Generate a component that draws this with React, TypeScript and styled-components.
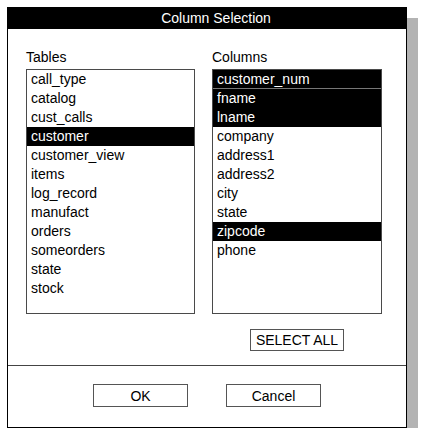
import React from 'react';
import styled, { createGlobalStyle } from 'styled-components';

const GlobalStyle = createGlobalStyle`
  html, body {
    margin: 0;
    padding: 0;
    background: #fff;
  }
  body {
    font-family: "Liberation Sans", Arial, Helvetica, sans-serif;
    font-size: 14px;
    color: #000;
  }
`;

const Page = styled.div`
  padding: 7px 0 0 7px;
`;

const Dialog = styled.div`
  width: 398px;
  border: 1px solid #000;
  background: #fff;
  box-shadow: 11px 11px 0 #b3b3b3;
`;

const TitleBar = styled.div`
  height: 21px;
  line-height: 21px;
  background: #000;
  color: #fff;
  text-align: center;
  padding-left: 18px;
  font-size: 14px;
`;

const Body = styled.div`
  padding: 20px 0 14px 18px;
`;

const Panes = styled.div`
  display: grid;
  grid-template-columns: 169px 170px;
  column-gap: 17px;
`;

const Pane = styled.div`
  display: flex;
  flex-direction: column;
`;

const Label = styled.div`
  height: 17px;
  line-height: 17px;
  margin-bottom: 3px;
`;

const List = styled.ul`
  list-style: none;
  margin: 0;
  padding: 0;
  height: 245px;
  box-sizing: border-box;
  border: 1px solid #4a4a4a;
  overflow: hidden;
`;

const Item = styled.li<{ $selected?: boolean; $focus?: boolean }>`
  height: 19px;
  line-height: 19px;
  padding-left: 4px;
  white-space: nowrap;
  box-sizing: border-box;
  background: ${p => (p.$selected ? '#000' : 'transparent')};
  color: ${p => (p.$selected ? '#fff' : '#000')};
  border-bottom: ${p => (p.$focus ? '1px solid #777' : 'none')};
`;

const SelectRow = styled.div`
  display: grid;
  grid-template-columns: 169px 170px;
  column-gap: 17px;
  margin-top: 15px;
`;

const SelectCell = styled.div`
  grid-column: 2;
  display: flex;
  justify-content: center;
`;

const Button = styled.button<{ $w: number; $h: number }>`
  width: ${p => p.$w}px;
  height: ${p => p.$h}px;
  padding: 0;
  margin: 0;
  border: 1px solid #555;
  border-radius: 0;
  background: #fff;
  color: #000;
  font-family: inherit;
  font-size: 14px;
  line-height: 1;
  cursor: pointer;
`;

const Separator = styled.hr`
  margin: 0;
  border: none;
  border-top: 1px solid #444;
`;

const Footer = styled.div`
  display: flex;
  justify-content: center;
  gap: 38px;
  padding: 18px 0 20px;
`;

const tables = [
  'call_type',
  'catalog',
  'cust_calls',
  'customer',
  'customer_view',
  'items',
  'log_record',
  'manufact',
  'orders',
  'someorders',
  'state',
  'stock',
];

const columns = [
  'customer_num',
  'fname',
  'lname',
  'company',
  'address1',
  'address2',
  'city',
  'state',
  'zipcode',
  'phone',
];

const selectedTable = 'customer';
const selectedColumns = ['customer_num', 'fname', 'lname', 'zipcode'];

export default function App() {
  return (
    <Page>
      <GlobalStyle />
      <Dialog>
        <TitleBar>Column Selection</TitleBar>
        <Body>
          <Panes>
            <Pane>
              <Label>Tables</Label>
              <List>
                {tables.map(t => (
                  <Item key={t} $selected={t === selectedTable}>
                    {t}
                  </Item>
                ))}
              </List>
            </Pane>
            <Pane>
              <Label>Columns</Label>
              <List>
                {columns.map((c, i) => (
                  <Item key={c} $selected={selectedColumns.includes(c)} $focus={i === 0}>
                    {c}
                  </Item>
                ))}
              </List>
            </Pane>
          </Panes>
          <SelectRow>
            <SelectCell>
              <Button $w={94} $h={22}>SELECT ALL</Button>
            </SelectCell>
          </SelectRow>
        </Body>
        <Separator />
        <Footer>
          <Button $w={95} $h={23}>OK</Button>
          <Button $w={95} $h={23}>Cancel</Button>
        </Footer>
      </Dialog>
    </Page>
  );
}
